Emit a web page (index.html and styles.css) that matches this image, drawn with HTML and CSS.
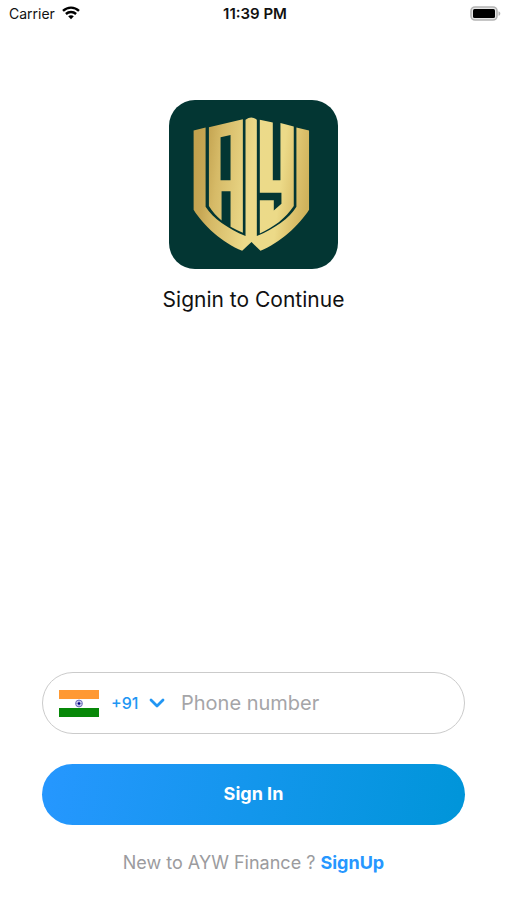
FILE: index.html
```html
<!DOCTYPE html>
<html lang="en">

<head>
    <meta charset="UTF-8">
    <meta name="viewport" content="width=device-width, initial-scale=1.0">
    <title>AYW Finance</title>
    <link rel="stylesheet" href="styles.css">
</head>

<body>
    <header class="status">
        <div class="carrier">
            <span>Carrier</span>
            <svg class="wifi" width="18" height="14" viewBox="0 0 18 14" fill="none" stroke="#000" stroke-width="2.4">
                <path d="M1 4.8C5.6.5 12.4.5 17 4.8" />
                <path d="M3.9 8C6.8 5.3 11.2 5.3 14.1 8" />
                <path d="M6.2 10.3C7.8 8.9 10.2 8.9 11.8 10.3L9 13.2z" fill="#000" stroke="none" />
            </svg>
        </div>
        <time class="clock">11:39 PM</time>
        <svg class="battery" width="31" height="15" viewBox="0 0 31 15">
            <rect x="1" y="1" width="26" height="13" rx="4" fill="#e6e6e6" stroke="#b4b4b4" stroke-width="1.6" />
            <rect x="3" y="3" width="22" height="9" rx="1.5" />
            <path d="M28.5 5.2c2.4.8 2.4 3.8 0 4.6z" fill="#b4b4b4" />
        </svg>
    </header>

    <main class="login">
        <div class="brand">
            <svg class="logo" viewBox="28 29 508 508" role="img" aria-label="AYW Finance">
                <defs>
                    <linearGradient id="gold" gradientUnits="userSpaceOnUse" x1="102" y1="250" x2="449" y2="290">
                        <stop offset="0" stop-color="#c2a24e" />
                        <stop offset=".1" stop-color="#c7a855" />
                        <stop offset=".2" stop-color="#d6ba67" />
                        <stop offset=".5" stop-color="#ecda8a" />
                        <stop offset=".75" stop-color="#ecda88" />
                        <stop offset=".9" stop-color="#dbc06b" />
                        <stop offset="1" stop-color="#cfb25b" />
                    </linearGradient>
                </defs>
                <rect x="28" y="29" width="508" height="508" rx="78" fill="#033633" />
                <g fill="url(#gold)">
                    <path d="M102 121L138 112V350C160 385 205 416 258 438V88Q276 75 292 88V438C345 416 390 385 411 350V112L449 121V359C420 405 360 460 303 482L276 456L248 482C190 460 130 405 102 359z" />
                    <path fill-rule="evenodd" d="M148 111L250 87V428Q231 420 213 410V303H186V391Q163 373 148 348zM183 141V270H213V134z" />
                    <path d="M301 88L340 97V270H363V98L403 109V348C378 386 342 412 301 430V330H343V361L366 341V308H301z" />
                </g>
            </svg>
            <h1 class="title">Signin to Continue</h1>
        </div>

        <form class="form">
            <div class="phone">
                <svg class="flag" width="40" height="27" viewBox="0 0 40 27">
                    <path fill="#ff9933" d="M0 0h40v9H0z" />
                    <path fill="#fff" d="M0 9h40v9H0z" />
                    <path fill="#078808" d="M0 18h40v9H0z" />
                    <circle cx="20" cy="13.5" r="3.4" fill="#e4e4f5" stroke="#6666b8" />
                    <path d="M17 13.5h6M20 10.5v6M18 11.5l4 4M22 11.5l-4 4" stroke="#6666b8" stroke-width=".6" />
                    <circle cx="20" cy="13.5" r="1.2" fill="#000080" />
                </svg>
                <select class="code" aria-label="Country code">
                    <option>+91</option>
                </select>
                <svg class="arrow" width="16" height="10" viewBox="0 0 16 10" fill="none" stroke="#2196f3" stroke-width="2.8" stroke-linecap="round" stroke-linejoin="round">
                    <path d="M2 2l6 6 6-6" />
                </svg>
                <input class="number" type="tel" placeholder="Phone number" aria-label="Phone number">
            </div>
            <button class="signin" type="submit">Sign In</button>
            <p class="signup">New to AYW Finance ? <a href="#">SignUp</a></p>
        </form>
    </main>
</body>

</html>
```
FILE: styles.css
```css
* {
    box-sizing: border-box;
}

body {
    margin: 0;
    min-height: 100vh;
    display: flex;
    flex-direction: column;
    background-color: #fff;
    color: #111;
    font-family: Inter, "Liberation Sans", sans-serif;
}

.status {
    display: grid;
    grid-template-columns: 1fr auto 1fr;
    align-items: center;
    height: 26px;
    padding: 0 6px 0 9px;
    font-size: 14px;
}

.carrier {
    display: flex;
    align-items: center;
    gap: 7px;
}

.clock {
    font-size: 15px;
    font-weight: 600;
}

.battery {
    justify-self: end;
}

.login {
    flex: 1;
    display: flex;
    flex-direction: column;
    justify-content: space-between;
    padding: 74px 42px 24px;
}

.brand {
    display: flex;
    flex-direction: column;
    align-items: center;
    gap: 16px;
}

.logo {
    width: 169px;
    height: 169px;
}

.title {
    margin: 0;
    font-size: 21px;
    line-height: 30px;
    font-weight: 400;
}

.phone {
    display: flex;
    align-items: center;
    height: 62px;
    padding: 0 16px;
    border: 1px solid #cbcbcb;
    border-radius: 31px;
}

.code {
    appearance: none;
    width: 38px;
    margin-left: 12px;
    padding: 0;
    border: 0;
    background: none;
    color: #2196f3;
    font: inherit;
    font-size: 16px;
    font-weight: 500;
}

.number {
    flex: 1;
    min-width: 0;
    margin-left: 16px;
    padding: 0;
    border: 0;
    outline: 0;
    background: none;
    color: #111;
    font: inherit;
    font-size: 20px;
}

.number::placeholder {
    color: #a5a5a8;
}

.signin {
    display: block;
    width: 100%;
    height: 61px;
    margin-top: 30px;
    padding: 0 0 2px;
    border: 0;
    border-radius: 31px;
    background: linear-gradient(100deg, #2697ff, #0095d9);
    color: #fff;
    font: inherit;
    font-size: 18px;
    font-weight: 700;
    cursor: pointer;
}

.signup {
    margin: 25px 0 0;
    color: #9b9b9e;
    font-size: 18px;
    line-height: 26px;
    text-align: center;
}

.signup a {
    color: #2697ff;
    font-weight: 700;
    text-decoration: none;
}
```
